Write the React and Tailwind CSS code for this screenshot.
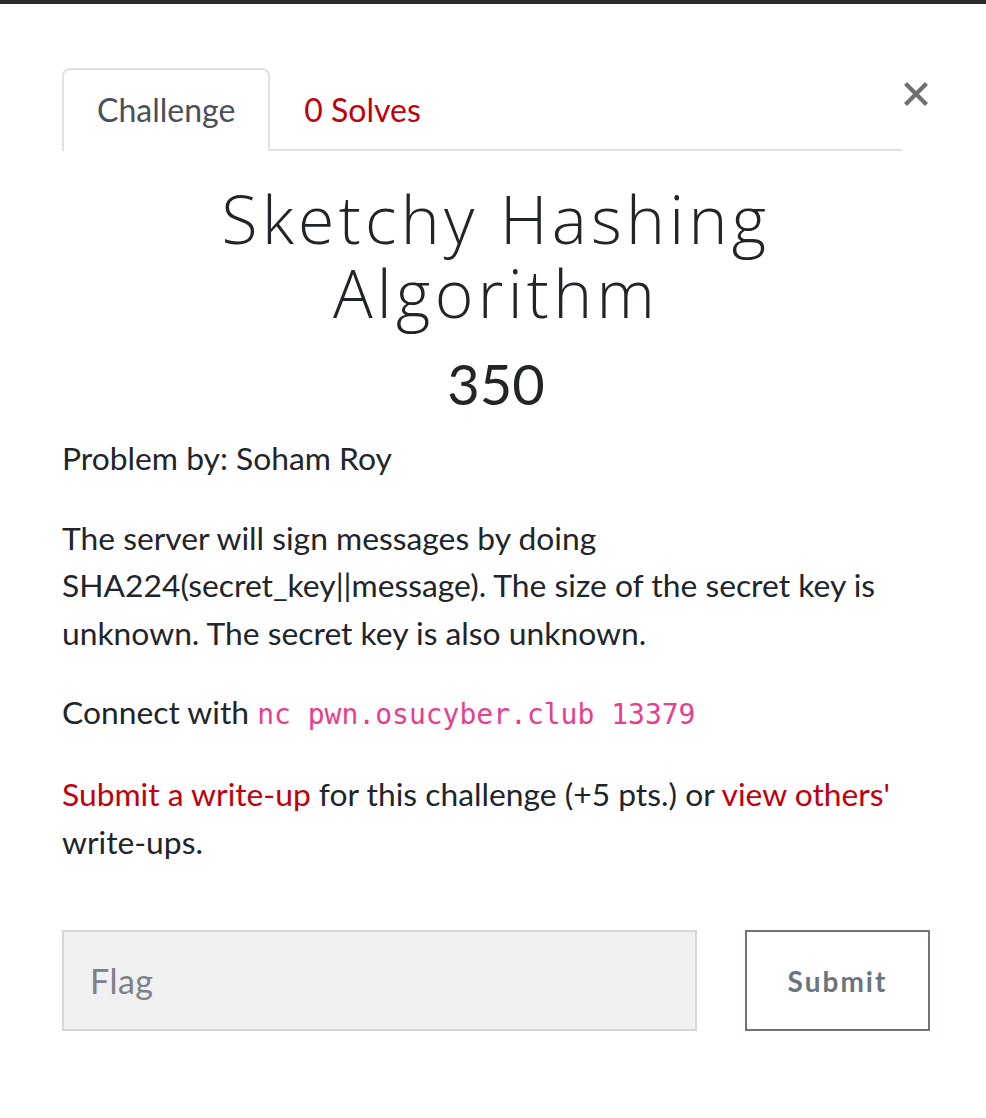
import React from 'react';

function CloseIcon() {
  return (
    <svg width="24" height="24" viewBox="0 0 24 24" className="block">
      <path d="M1.5 1.5 L22.5 22.5 M22.5 1.5 L1.5 22.5" stroke="#6f6f6f" strokeWidth="4.2" strokeLinecap="butt" />
    </svg>
  );
}

export default function App() {
  return (
    <div className="min-h-[1118px] bg-white font-['Lato','Liberation_Sans',sans-serif] text-[#212529]">
      {/* page behind the modal */}
      <div className="h-[4px] bg-[#2a2a2a]" />

      <div className="pl-[62px] pr-[56px] pt-[64px] pb-10">
        <div className="flex items-start">
          <nav className="flex-1 flex border-b-2 border-[#dee2e6]">
            <div className="-mb-[2px] px-[33px] pt-[20px] pb-[21px] border-2 border-b-0 border-[#dee2e6] rounded-t-[8px] bg-white text-[32px] leading-[40px] text-[#495057]">
              Challenge
            </div>
            <div className="px-[34px] pt-[22px] pb-[19px] text-[32px] leading-[40px] text-[#c0000b]">
              0 Solves
            </div>
          </nav>
          <button className="w-[28px] pt-[14px] flex justify-center">
            <CloseIcon />
          </button>
        </div>

        <h1 className="mt-[30px] text-center font-['Open_Sans','Lato',sans-serif] font-light text-[66px] leading-[74px] tracking-[4.3px] text-[#212529]">
          Sketchy Hashing
          <br />
          Algorithm
        </h1>
        <div className="mt-[22px] text-center text-[56px] leading-[66px] text-[#212529]">350</div>

        <div className="mt-[18px] text-[31.8px] leading-[47.6px]">
          <p className="mb-[32px]">Problem by: Soham Roy</p>
          <p className="mb-[32px]">
            The server will sign messages by doing SHA224(secret_key||message). The size of the secret key is unknown. The secret key is also unknown.
          </p>
          <p className="mb-[32px]">
            Connect with{' '}
            <code className="font-['DejaVu_Sans_Mono','Liberation_Mono',monospace] text-[28px] text-[#e83e8c]">
              nc pwn.osucyber.club 13379
            </code>
          </p>
          <p className="mb-[32px]">
            <a className="text-[#c0000b]">Submit a write-up</a> for this challenge (+5 pts.) or{' '}
            <a className="text-[#c0000b]">view others'</a> write-ups.
          </p>
        </div>

        <div className="mt-[64px] flex items-stretch gap-[48px]">
          <div className="flex-1 h-[101px] bg-[#f0f0f0] border-2 border-[#d3d6da] flex items-center px-[26px]">
            <span className="text-[34px] text-[#7b8288] tracking-[0.5px]">Flag</span>
          </div>
          <button className="w-[185px] h-[101px] border-2 border-[#6c757d] bg-white flex items-center justify-center text-[28px] font-bold tracking-[2px] text-[#6c757d]">
            Submit
          </button>
        </div>
      </div>
    </div>
  );
}
